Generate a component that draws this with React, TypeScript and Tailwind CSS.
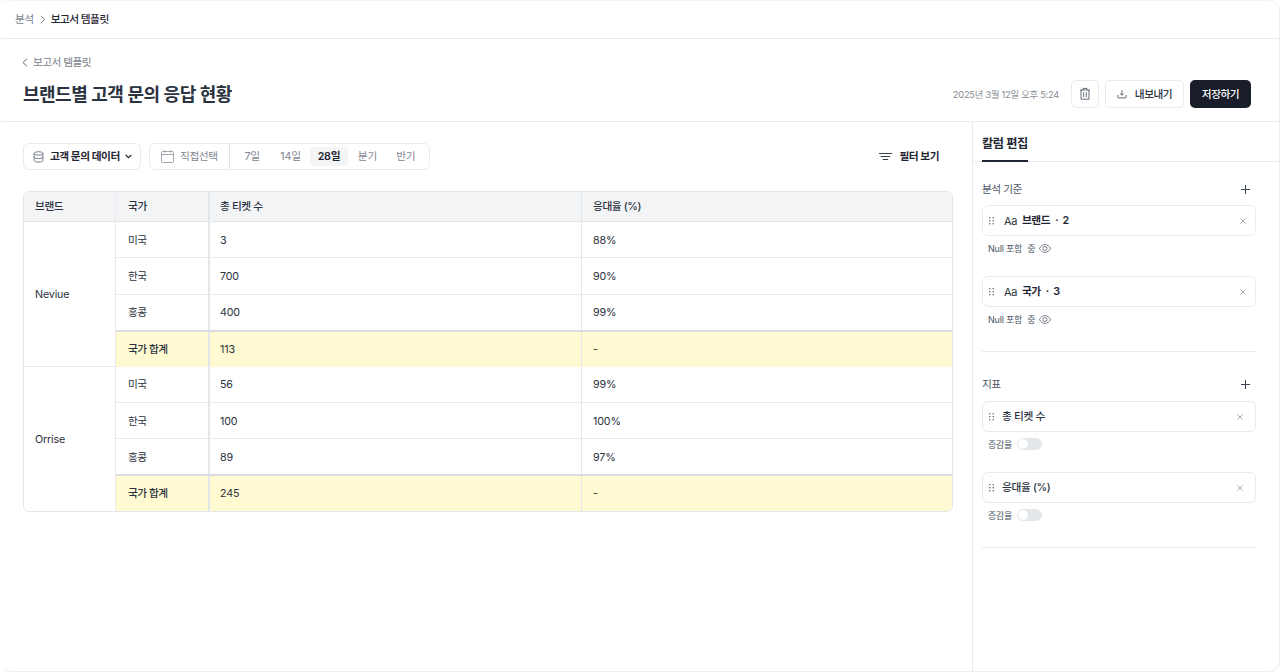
import React, { useState } from 'react';
import clsx from 'clsx';

interface CountryRow {
  country: string;
  tickets: string;
  rate: string;
}

interface BrandGroup {
  brand: string;
  rows: CountryRow[];
  total: CountryRow;
}

const BRAND_GROUPS: BrandGroup[] = [
  {
    brand: 'Neviue',
    rows: [
      { country: '미국', tickets: '3', rate: '88%' },
      { country: '한국', tickets: '700', rate: '90%' },
      { country: '홍콩', tickets: '400', rate: '99%' },
    ],
    total: { country: '국가 합계', tickets: '113', rate: '-' },
  },
  {
    brand: 'Orrise',
    rows: [
      { country: '미국', tickets: '56', rate: '99%' },
      { country: '한국', tickets: '100', rate: '100%' },
      { country: '홍콩', tickets: '89', rate: '97%' },
    ],
    total: { country: '국가 합계', tickets: '245', rate: '-' },
  },
];

const PERIODS = ['7일', '14일', '28일', '분기', '반기'];

function TrashIcon() {
  return (
    <svg width="12" height="14" viewBox="0 0 12 14" fill="none" stroke="#565e6b" strokeWidth="0.9">
      <path d="M1 3h10M4 3V1.4h4V3M2 3v9.2h8V3M4.7 5.2v5M7.3 5.2v5" />
    </svg>
  );
}

function ExportIcon() {
  return (
    <svg width="10" height="10" viewBox="0 0 10 10" fill="none" stroke="#4b5563" strokeWidth="0.9">
      <path d="M5 1.2v5M3.2 4.5 5 6.3l1.8-1.8M.8 6v1.9c0 .6.4 1 1 1h6.4c.6 0 1-.4 1-1V6" />
    </svg>
  );
}

function DatabaseIcon() {
  return (
    <svg width="11" height="12" viewBox="0 0 11 12" fill="none" stroke="#565e6b" strokeWidth="0.8">
      <ellipse cx="5.5" cy="2.4" rx="4.4" ry="1.7" />
      <path d="M1.1 2.4v7c0 1 2 1.700 4.400 1.700s4.400-.7 4.400-1.700v-7M1.100 5.900c0 1 2 1.700 4.400 1.700s4.400-.7 4.400-1.700" />
    </svg>
  );
}

function CalendarIcon() {
  return (
    <svg width="13" height="13" viewBox="0 0 13 13" fill="none" stroke="#8b919a" strokeWidth="0.8">
      <rect x=".5" y="1.5" width="12" height="11" rx="1" />
      <path d="M.5 4.500h12M3.500 .3v2.500M9.500 .3v2.500" />
    </svg>
  );
}

function FilterIcon() {
  return (
    <svg width="13" height="9" viewBox="0 0 13 9" stroke="#374151" strokeWidth="1.1">
      <path d="M0 1.500h13M1.800 4.500h9.400M3.800 7.500h5.400" />
    </svg>
  );
}

function GripIcon() {
  return (
    <svg width="5" height="8" viewBox="0 0 5 8" fill="#565e6b">
      {[0.8, 3.8, 6.8].map((y) => (
        <React.Fragment key={y}>
          <circle cx=".8" cy={y} r=".75" />
          <circle cx="4.2" cy={y} r=".75" />
        </React.Fragment>
      ))}
    </svg>
  );
}

function EyeIcon() {
  return (
    <svg width="12" height="9" viewBox="0 0 12 9" fill="none" stroke="#5b6370" strokeWidth="0.8">
      <path d="M.5 4.500C1.700 2 3.700.6 6 .6s4.300 1.400 5.500 3.900C10.300 7 8.300 8.400 6 8.400S1.700 7 .5 4.500Z" />
      <circle cx="6" cy="4.5" r="2" />
    </svg>
  );
}

function CloseIcon() {
  return (
    <svg width="6" height="6" viewBox="0 0 6 6" stroke="#9298a1" strokeWidth="0.8">
      <path d="m.4.4 5.200 5.200M5.600.4.4 5.600" />
    </svg>
  );
}

function SectionTitle({ title }: { title: string }) {
  return (
    <div className="flex h-[22px] items-center justify-between pr-[6px]">
      <span className="pt-[2px] text-[10.7px] tracking-[-0.5px] text-[#4b5563]">{title}</span>
      <button type="button">
        <svg width="9" height="9" viewBox="0 0 9 9" stroke="#374151" strokeWidth="1">
          <path d="M4.500 0v9M0 4.500h9" />
        </svg>
      </button>
    </div>
  );
}

function DimensionItem({ name, count }: { name: string; count: number }) {
  return (
    <div>
      <div className="flex h-[31px] items-center rounded-[6px] border border-[#e8eaed] pr-[9px] pl-[6px]">
        <GripIcon />
        <span className="ml-[10px] pt-px text-[11px] tracking-[-0.4px]">Aa</span>
        <span className="ml-[5px] pt-[2px] text-[10.7px] font-semibold tracking-[-0.45px] text-[#1f2533]">
          {name}
        </span>
        <span className="ml-[5px] pt-[2px] text-[10.7px] font-semibold">·</span>
        <span className="ml-[4px] pt-[2px] text-[10.7px] font-semibold text-[#1f2533]">{count}</span>
        <button type="button" className="ml-auto">
          <CloseIcon />
        </button>
      </div>
      <div className="flex h-6 items-center pl-[6px] text-[9px] tracking-[-0.2px] text-[#4b5563]">
        <span>Null 포함</span>
        <span className="mr-1 ml-[5px]">중</span>
        <EyeIcon />
      </div>
    </div>
  );
}

function MetricItem({ name }: { name: string }) {
  const [isOn, setIsOn] = useState<boolean>(false);

  return (
    <div>
      <div className="flex h-[31px] items-center rounded-[6px] border border-[#e8eaed] pr-[12px] pl-[6px]">
        <GripIcon />
        <span className="ml-[8px] pt-[2px] text-[10.7px] font-medium tracking-[-0.35px]">{name}</span>
        <button type="button" className="ml-auto">
          <CloseIcon />
        </button>
      </div>
      <div className="flex h-6 items-center gap-[5px] pl-[6px]">
        <span className="text-[9px] tracking-[-0.3px] text-[#4b5563]">증감율</span>
        <button
          type="button"
          onClick={() => setIsOn(!isOn)}
          className={clsx(
            'flex h-[12px] w-[25px] items-center rounded-full p-px',
            isOn ? 'justify-end bg-[#1b1f2b]' : 'bg-[#e4e7ea]',
          )}
        >
          <span className="size-[10px] rounded-full bg-white" />
        </button>
      </div>
    </div>
  );
}

export default function App() {
  const [period, setPeriod] = useState<string>('28일');

  return (
    <div className="flex h-screen w-full flex-col overflow-hidden rounded-[10px] border border-t-[#f4f5f6] border-r-[#eceef0] border-b-[#eceef0] border-l-transparent bg-white font-['Inter','Noto_Sans_CJK_KR',sans-serif] leading-none text-[#2b3240]">
      {/* 경로 */}
      <nav className="flex h-[38px] shrink-0 items-center border-b border-[#e8eaed] pl-[14px] text-[10.7px]">
        <span className="pt-[2px] tracking-[-0.5px] text-[#7a818c]">분석</span>
        <svg className="mr-[5px] ml-[6px]" width="6" height="9" viewBox="0 0 6 9" fill="none" stroke="#7a818c">
          <path d="m.8.8 4 3.700-4 3.700" />
        </svg>
        <span className="pt-[2px] font-medium tracking-[-0.55px] text-[#1f2533]">보고서 템플릿</span>
      </nav>

      {/* 제목 */}
      <header className="flex h-[83px] shrink-0 flex-col border-b border-[#e8eaed] pt-[15px] pr-[28px] pl-[21px]">
        <div className="flex h-4 items-center gap-[5px]">
          <svg width="6" height="9" viewBox="0 0 6 9" fill="none" stroke="#5b6370">
            <path d="M5 .7 1 4.500l4 3.800" />
          </svg>
          <span className="pt-[2px] text-[10.7px] tracking-[-0.55px] text-[#7a818c]">보고서 템플릿</span>
        </div>
        <div className="mt-[10px] flex h-7 items-center">
          <h1 className="pt-px pl-px text-[18px] font-semibold tracking-[-0.5px] text-[#2b3240]">
            브랜드별 고객 문의 응답 현황
          </h1>
          <span className="mr-[12px] ml-auto pt-px text-[9.3px] tracking-[-0.25px] text-[#868d97]">
            2025년 3월 12일 오후 5:24
          </span>
          <button
            type="button"
            className="flex size-7 items-center justify-center rounded-[5px] border border-[#e8eaed]"
          >
            <TrashIcon />
          </button>
          <button
            type="button"
            className="ml-[6px] flex h-7 w-[79px] items-center justify-center gap-[8px] rounded-[5px] border border-[#e8eaed]"
          >
            <ExportIcon />
            <span className="pt-[2px] text-[10.7px] font-medium tracking-[-0.5px]">내보내기</span>
          </button>
          <button
            type="button"
            className="ml-[6px] h-7 w-[61px] rounded-[5px] bg-[#1a1e2a] pt-[2px] text-[10.7px] font-medium tracking-[-0.5px] text-white"
          >
            저장하기
          </button>
        </div>
      </header>

      <div className="flex min-h-0 flex-1">
        <main className="flex-1 pt-[21px] pr-[19px] pl-[22px]">
          <div className="flex h-[27px] items-center">
            <button
              type="button"
              className="flex h-full w-[118px] items-center rounded-[6px] border border-[#e8eaed] pl-[9px]"
            >
              <DatabaseIcon />
              <span className="ml-[6px] pt-px text-[10.7px] font-semibold tracking-[-0.5px] whitespace-nowrap text-[#1f2533]">
                고객 문의 데이터
              </span>
              <svg className="ml-[5px]" width="7" height="5" viewBox="0 0 7 5" fill="none" stroke="#1f2533" strokeWidth="1.2">
                <path d="m.7 1 2.800 2.700L6.300 1" />
              </svg>
            </button>

            <div className="ml-[8px] flex h-full w-[281px] rounded-[6px] border border-[#e8eaed] text-[10.7px] text-[#7f8690]">
              <button type="button" className="flex w-[80px] items-center border-r border-[#dfe2e6] pl-[11px]">
                <CalendarIcon />
                <span className="ml-[6px] pt-[2px] tracking-[-0.4px]">직접선택</span>
              </button>
              <div className="flex flex-1 items-center pr-[4px] pl-[3px]">
                {PERIODS.map((item) => (
                  <button
                    key={item}
                    type="button"
                    onClick={() => setPeriod(item)}
                    className={clsx(
                      'h-[19px] flex-1 rounded-[4px] pt-[2px] tracking-[-0.2px]',
                      item === period && 'bg-[#f3f4f6] font-semibold text-[#1f2533]',
                    )}
                  >
                    {item}
                  </button>
                ))}
              </div>
            </div>

            <button type="button" className="mr-[14px] ml-auto flex items-center gap-[7px]">
              <FilterIcon />
              <span className="pt-[2px] text-[10.7px] font-semibold tracking-[-0.5px] text-[#1f2533]">필터 보기</span>
            </button>
          </div>

          {/* 테이블 */}
          <div className="mt-[21px] overflow-hidden rounded-[6px] border border-[#e4e7ea] text-[10.7px]">
            <div className="flex h-[30px] items-center border-b border-[#e4e7ea] bg-[#f3f4f6] font-medium tracking-[-0.4px]">
              <div className="flex h-full w-[92px] items-center border-r border-[#e8eaed] pt-[2px] pl-[11px]">
                브랜드
              </div>
              <div className="flex h-full w-[94px] items-center border-r-2 border-[#e4e7ea] pt-[2px] pl-[12px]">
                국가
              </div>
              <div className="flex h-full w-[372px] items-center border-r border-[#e4e7ea] pt-[2px] pl-[10px]">
                총 티켓 수
              </div>
              <div className="flex h-full flex-1 items-center pt-[2px] pl-[11px]">응대율 (%)</div>
            </div>
            {BRAND_GROUPS.map(({ brand, rows, total }, index) => (
              <div key={brand} className="flex">
                <div
                  className={clsx(
                    'flex w-[92px] items-center border-r border-[#e8eaed] pt-[4px] pl-[11px] tracking-[-0.15px]',
                    index < BRAND_GROUPS.length - 1 && 'border-b',
                  )}
                >
                  {brand}
                </div>
                <div className="flex-1">
                  {[...rows, total].map((row, rowIndex) => {
                    const isTotal = row === total;
                    const isLast = rowIndex === rows.length - 1;
                    return (
                      <div
                        key={row.country}
                        className={clsx(
                          'flex border-[#e8eaed]',
                          isTotal && 'h-[34.75px] bg-[#fffad1]',
                          isLast && 'h-[37px] border-b-2 border-b-[#d9dce1]',
                          !isTotal && !isLast && 'h-[36.375px] border-b',
                        )}
                      >
                        <div
                          className={clsx(
                            'flex w-[94px] items-center border-r-2 border-[#e4e7ea] pl-[12px] tracking-[-0.5px]',
                            isTotal ? 'pt-[1.5px] font-medium' : 'pt-[2.75px]',
                          )}
                        >
                          {row.country}
                        </div>
                        <div
                          className={clsx(
                            'flex w-[372px] items-center border-r border-[#e4e7ea] pl-[10px] tracking-[-0.15px]',
                            isTotal ? 'pt-[1.5px]' : 'pt-[2.75px]',
                          )}
                        >
                          {row.tickets}
                        </div>
                        <div
                          className={clsx(
                            'flex flex-1 items-center pl-[11px] tracking-[-0.15px]',
                            isTotal ? 'pt-[1.5px]' : 'pt-[2.75px]',
                          )}
                        >
                          {row.rate}
                        </div>
                      </div>
                    );
                  })}
                </div>
              </div>
            ))}
          </div>
        </main>

        {/* 칼럼 편집 */}
        <aside className="w-[307px] shrink-0 border-l border-[#e8eaed]">
          <div className="flex h-10 border-b border-[#e8eaed] pl-[9px]">
            <div className="-mb-px flex h-10 items-center border-b-2 border-[#1f2533] pt-[7px] text-[12.2px] font-semibold tracking-[-0.45px] text-[#1f2533]">
              칼럼 편집
            </div>
          </div>
          <div className="pt-4 pr-[23px] pl-[9px]">
            <SectionTitle title="분석 기준" />
            <div className="mt-[5px] flex flex-col gap-4">
              <DimensionItem name="브랜드" count={2} />
              <DimensionItem name="국가" count={3} />
            </div>
            <hr className="mt-5 border-[#e8eaed]" />
            <div className="mt-[21px]">
              <SectionTitle title="지표" />
            </div>
            <div className="mt-[6px] flex flex-col gap-4">
              <MetricItem name="총 티켓 수" />
              <MetricItem name="응대율 (%)" />
            </div>
            <hr className="mt-5 border-[#e8eaed]" />
          </div>
        </aside>
      </div>
    </div>
  );
}
